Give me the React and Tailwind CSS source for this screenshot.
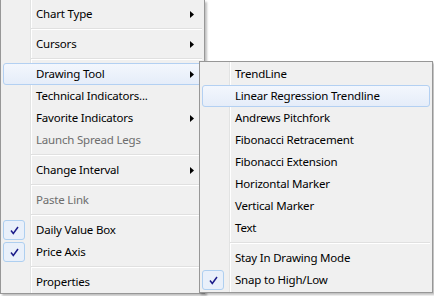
import React from 'react';

const mainItems = [
  { label: 'Chart Type', arrow: true },
  { sep: true },
  { label: 'Cursors', arrow: true },
  { sep: true },
  { label: 'Drawing Tool', arrow: true, active: true },
  { label: 'Technical Indicators...' },
  { label: 'Favorite Indicators', arrow: true },
  { label: 'Launch Spread Legs', disabled: true },
  { sep: true },
  { label: 'Change Interval', arrow: true },
  { sep: true },
  { label: 'Paste Link', disabled: true },
  { sep: true },
  { label: 'Daily Value Box', checked: true },
  { label: 'Price Axis', checked: true },
  { sep: true },
  { label: 'Properties' },
];

const drawingItems = [
  { label: 'TrendLine' },
  { label: 'Linear Regression Trendline', active: true },
  { label: 'Andrews Pitchfork' },
  { label: 'Fibonacci Retracement' },
  { label: 'Fibonacci Extension' },
  { label: 'Horizontal Marker' },
  { label: 'Vertical Marker' },
  { label: 'Text' },
  { sep: true },
  { label: 'Stay In Drawing Mode' },
  { label: 'Snap to High/Low', checked: true },
];

function Arrow() {
  return (
    <svg width="4" height="7" viewBox="0 0 4 7" className="ml-auto mr-[7px]">
      <path d="M0 0L4 3.5L0 7z" fill="#000" />
    </svg>
  );
}

function Check() {
  return (
    <div className="-ml-px w-[22px] h-[20px] rounded-[3px] border border-[#aecff0] bg-[#e9f0fa] flex items-center justify-center">
      <svg width="9" height="9" viewBox="0 0 9 9">
        <path d="M1 4.5L3.3 7.5L8 1" fill="none" stroke="#1c1c8a" strokeWidth="1.5" />
      </svg>
    </div>
  );
}

function MenuList({ items }) {
  return items.map((item, i) => {
    if (item.sep) {
      return (
        <div key={i} className="h-[8px] flex items-center pl-[30px] pr-[2px]">
          <div className="h-[2px] w-full border-t border-[#e0e0e0] bg-white" />
        </div>
      );
    }
    return (
      <div
        key={i}
        className={`h-[22px] mx-[2px] flex items-center rounded-[3px] border ${
          item.active
            ? 'border-[#b3d0f2] bg-[linear-gradient(to_bottom,#f3f7fd,#e5edf9)]'
            : 'border-transparent'
        }`}
      >
        <div className="w-[32px] flex-shrink-0 flex items-center">
          {item.checked && <Check />}
        </div>
        <span className={`whitespace-nowrap ${item.disabled ? 'text-[#6d6d6d]' : 'text-black'}`}>
          {item.label}
        </span>
        {item.arrow && <Arrow />}
      </div>
    );
  });
}

const gutter =
  'bg-[linear-gradient(to_right,#f0f0f0_29px,#e2e3e3_29px,#e2e3e3_30px,#ffffff_30px,#ffffff_31px,#f0f0f0_31px)]';

export default function App() {
  return (
    <div
      className="relative w-[434px] h-[296px] bg-white overflow-hidden text-[11.5px] tracking-[-0.2px] leading-none"
      style={{ fontFamily: '"Noto Sans", "Open Sans", sans-serif' }}
    >
      {/* Main context menu */}
      <div className={`w-[205px] pt-[3px] border-l border-r border-b border-[#979797] shadow-[2px_2px_2px_rgba(0,0,0,0.25)] ${gutter}`}>
        <MenuList items={mainItems} />
      </div>

      {/* Drawing Tool submenu */}
      <div className={`absolute left-[199px] top-[61px] w-[234px] h-[232px] py-px border border-[#979797] shadow-[2px_2px_2px_rgba(0,0,0,0.25)] ${gutter}`}>
        <MenuList items={drawingItems} />
      </div>
    </div>
  );
}
